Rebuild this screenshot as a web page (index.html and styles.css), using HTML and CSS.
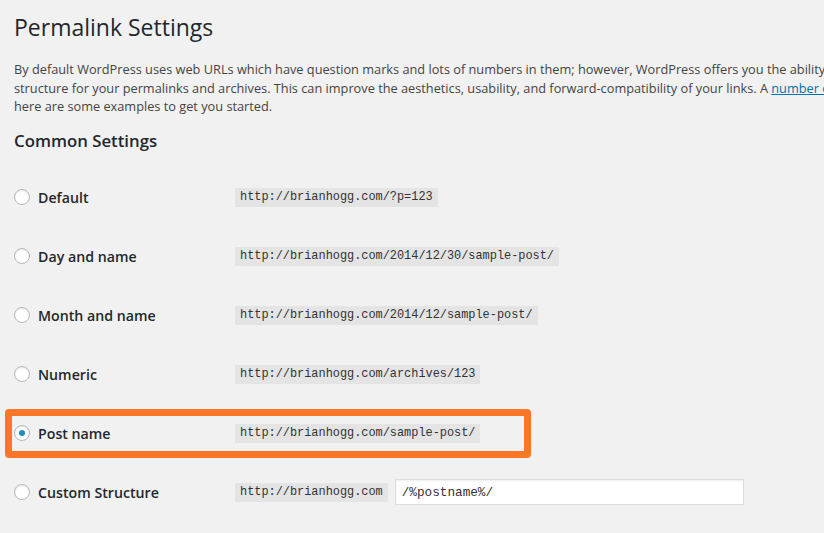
FILE: index.html
```html
<!DOCTYPE html>
<html lang="en">
<head>
<meta charset="utf-8">
<title>Permalink Settings</title>
<link rel="stylesheet" href="styles.css">
</head>
<body>
<div class="wrap">
  <h1 class="title">Permalink Settings</h1>
  <p class="intro">By default WordPress uses web URLs which have question marks and lots of numbers in them; however, WordPress offers you the ability to create a custom URL<br>structure for your permalinks and archives. This can improve the aesthetics, usability, and forward-compatibility of your links. A <a href="#">number of tags</a> are available, and<br>here are some examples to get you started.</p>
  <h2 class="section">Common Settings</h2>
  <div class="options">
    <div class="row">
      <span class="radio"></span>
      <span class="label">Default</span>
      <div class="value"><code>http://brianhogg.com/?p=123</code></div>
    </div>
    <div class="row">
      <span class="radio"></span>
      <span class="label">Day and name</span>
      <div class="value"><code>http://brianhogg.com/2014/12/30/sample-post/</code></div>
    </div>
    <div class="row">
      <span class="radio"></span>
      <span class="label">Month and name</span>
      <div class="value"><code>http://brianhogg.com/2014/12/sample-post/</code></div>
    </div>
    <div class="row">
      <span class="radio"></span>
      <span class="label">Numeric</span>
      <div class="value"><code>http://brianhogg.com/archives/123</code></div>
    </div>
    <div class="row highlighted">
      <span class="radio checked"></span>
      <span class="label">Post name</span>
      <div class="value"><code>http://brianhogg.com/sample-post/</code></div>
    </div>
    <div class="row">
      <span class="radio"></span>
      <span class="label">Custom Structure</span>
      <div class="value"><code>http://brianhogg.com</code><span class="input">/%postname%/</span></div>
    </div>
  </div>
</div>
</body>
</html>
```

FILE: styles.css
```css
html, body {
  margin: 0;
  padding: 0;
  background: #f1f1f1;
  overflow: hidden;
}

body {
  font-family: "Open Sans", "Noto Sans", sans-serif;
  color: #444;
}

.wrap {
  padding: 11px 0 0 14px;
}

.title {
  margin: 0;
  font-size: 23px;
  line-height: 32px;
  font-weight: 400;
  color: #23282d;
}

.intro {
  margin: 17px 0 0;
  font-size: 12.75px;
  line-height: 18.5px;
  white-space: nowrap;
  color: #444;
}

.intro a {
  color: #0073aa;
  text-decoration: underline;
}

.section {
  margin: 14px 0 0;
  font-size: 16.8px;
  line-height: 22px;
  font-weight: 600;
  color: #23282d;
}

.options {
  margin-top: 16px;
}

.row {
  position: relative;
  display: grid;
  grid-template-columns: 24px 197px 1fr;
  align-items: center;
  height: 59px;
}

.radio {
  width: 14px;
  height: 14px;
  border: 1px solid #b4b9be;
  border-radius: 50%;
  background: #fff;
  box-shadow: inset 0 1px 2px rgba(0, 0, 0, 0.1);
  display: flex;
  align-items: center;
  justify-content: center;
}

.radio.checked::before {
  content: "";
  width: 6px;
  height: 6px;
  border-radius: 50%;
  background: #1e8cbe;
}

.label {
  font-size: 14.2px;
  font-weight: 600;
  color: #23282d;
}

.value {
  display: flex;
  align-items: center;
  gap: 7px;
}

code {
  font-family: "Liberation Mono", "DejaVu Sans Mono", monospace;
  font-size: 11.9px;
  line-height: 15px;
  padding: 2px 5px;
  background: #e4e4e4;
  color: #333;
}

.input {
  box-sizing: border-box;
  width: 349px;
  height: 26px;
  padding: 0 6px;
  display: flex;
  align-items: center;
  background: #fff;
  border: 1px solid #ddd;
  box-shadow: inset 0 1px 2px rgba(0, 0, 0, 0.07);
  font-family: "Liberation Mono", "DejaVu Sans Mono", monospace;
  font-size: 12.7px;
  color: #333;
}

.highlighted::after {
  content: "";
  position: absolute;
  left: -9px;
  top: 5px;
  width: 526px;
  height: 49px;
  box-sizing: border-box;
  border: 7px solid #fd7628;
  border-radius: 4px;
  pointer-events: none;
}
```
